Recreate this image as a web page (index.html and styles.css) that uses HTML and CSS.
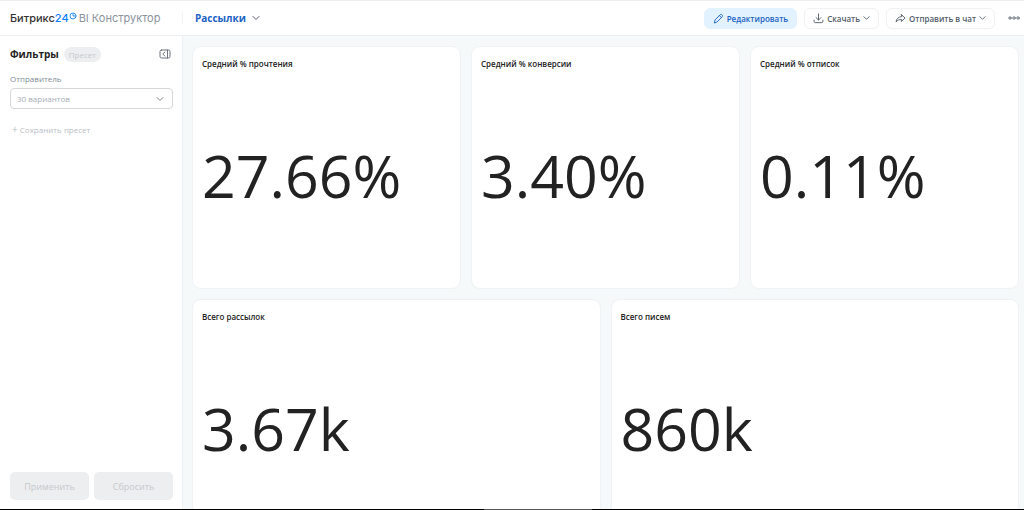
FILE: index.html
```
<!DOCTYPE html>
<html lang="ru">
<head>
    <meta charset="UTF-8">
    <meta name="viewport" content="width=device-width, initial-scale=1.0">
    <title>Рассылки - BI Конструктор</title>
    <link rel="stylesheet" href="styles.css">
</head>
<body>
    <header class="header">
        <a class="logo" href="#">
            <span class="logo-name">Битрикс</span><span class="logo-number">24</span>
            <svg class="logo-clock" viewBox="0 0 8 8"><circle cx="4" cy="4" r="3"/><path d="M4 2.2V4h1.6"/></svg>
            <span class="logo-product">BI Конструктор</span>
        </a>
        <button class="dashboard-switch" type="button">
            Рассылки
            <svg class="chevron" viewBox="0 0 8 8"><path d="M1 2.5l3 3 3-3"/></svg>
        </button>
        <div class="actions">
            <button class="btn btn-edit" type="button">
                <svg class="icon" viewBox="0 0 12 12"><path d="M1.5 10.5l.8-3L8 1.8q.7-.7 1.4 0l.8.8q.7.7 0 1.4L4.500 9.700zM7 2.800L9.200 5"/></svg>
                Редактировать
            </button>
            <button class="btn" type="button">
                <svg class="icon" viewBox="0 0 12 12"><path d="M6 1v6.500M3.300 5L6 7.700 8.700 5M1.200 7.800v1.400q0 1.300 1.300 1.300h7q1.300 0 1.300-1.300V7.800"/></svg>
                Скачать
                <svg class="chevron" viewBox="0 0 8 8"><path d="M1 2.500l3 3 3-3"/></svg>
            </button>
            <button class="btn" type="button">
                <svg class="icon" viewBox="0 0 12 12"><path d="M7 1.800l4 3.700-4 3.700V7.100C4.500 7 2.700 7.700 1.200 9.800 1.400 6.400 3.500 4.100 7 3.900z"/></svg>
                Отправить в чат
                <svg class="chevron" viewBox="0 0 8 8"><path d="M1 2.500l3 3 3-3"/></svg>
            </button>
            <button class="btn-more" type="button" aria-label="Ещё">
                <svg viewBox="0 0 12 4"><circle cx="2" cy="2" r="1.200"/><circle cx="6" cy="2" r="1.200"/><circle cx="10" cy="2" r="1.200"/></svg>
            </button>
        </div>
    </header>

    <div class="layout">
        <aside class="sidebar">
            <div class="sidebar-head">
                <h2 class="sidebar-title">Фильтры</h2>
                <span class="preset">Пресет</span>
                <button class="collapse" type="button" aria-label="Свернуть">
                    <svg viewBox="0 0 12 10"><rect x="1" y="1" width="10" height="8" rx="1.500"/><path d="M8.500 1v8M5.800 3L3.800 5l2 2"/></svg>
                </button>
            </div>
            <label class="field-label" for="sender">Отправитель</label>
            <div class="select-wrap">
                <select class="select" id="sender">
                    <option>30 вариантов</option>
                </select>
                <svg class="chevron select-arrow" viewBox="0 0 8 8"><path d="M1 2.500l3 3 3-3"/></svg>
            </div>
            <button class="save-preset" type="button"><span class="plus">+</span> Сохранить пресет</button>
            <div class="sidebar-buttons">
                <button class="filter-btn" type="button" disabled>Применить</button>
                <button class="filter-btn" type="button" disabled>Сбросить</button>
            </div>
        </aside>

        <main class="dashboard">
            <section class="card">
                <h3>Средний % прочтения</h3>
                <p>27.66%</p>
            </section>
            <section class="card">
                <h3>Средний % конверсии</h3>
                <p>3.40%</p>
            </section>
            <section class="card">
                <h3>Средний % отписок</h3>
                <p>0.11%</p>
            </section>
            <section class="card card-wide">
                <h3>Всего рассылок</h3>
                <p>3.67k</p>
            </section>
            <section class="card card-wide">
                <h3>Всего писем</h3>
                <p>860k</p>
            </section>
        </main>
    </div>
    <div class="bottom-line"><span></span></div>
</body>
</html>
```

FILE: styles.css
```
* {
    box-sizing: border-box;
}

body {
    margin: 0;
    height: 100vh;
    display: flex;
    flex-direction: column;
    overflow: hidden;
    background: #f5f9fa;
    color: #222;
    font-family: "Open Sans", "Noto Sans", sans-serif;
    font-size: 8px;
}

button,
select {
    font: inherit;
    color: inherit;
    padding: 0;
    border: none;
    background: none;
    cursor: pointer;
}

svg {
    display: block;
    flex: none;
    fill: none;
    stroke: currentColor;
    stroke-linecap: round;
    stroke-linejoin: round;
}

.chevron {
    width: 8px;
    height: 8px;
}

/* Header */
.header {
    display: flex;
    align-items: center;
    flex: none;
    height: 36px;
    padding-right: 4px;
    background: #fff;
    border-top: 1px solid #eceef0;
    border-bottom: 1px solid #edf0f2;
}

.logo {
    display: flex;
    align-items: center;
    width: 183px;
    height: 12px;
    padding-left: 10px;
    border-right: 1px solid #f1f3f4;
    font-family: Inter, Roboto, sans-serif;
    font-size: 11px;
    color: #333;
    text-decoration: none;
    white-space: nowrap;
}

.logo-name {
    font-weight: 500;
}

.logo-number {
    color: #0f7ff5;
    font-weight: 500;
}

.logo-clock {
    width: 8px;
    height: 8px;
    margin-bottom: 4px;
    color: #2f92f6;
}

.logo-product {
    margin-left: 2px;
    color: #8b939c;
}

.dashboard-switch {
    display: flex;
    align-items: center;
    gap: 6px;
    margin-left: 12px;
    color: #1b62c4;
    font-size: 10px;
    font-weight: 700;
}

.dashboard-switch .chevron {
    color: #525c69;
}

.actions {
    display: flex;
    align-items: center;
    gap: 7px;
    margin-left: auto;
}

.btn {
    display: flex;
    align-items: center;
    gap: 3px;
    height: 21px;
    padding: 0 8px;
    border: 1px solid #eff1f3;
    border-radius: 6px;
    color: #525c69;
    font-weight: 600;
    white-space: nowrap;
}

.btn .chevron {
    width: 7px;
}

.btn-edit {
    border-color: #e3f2ff;
    background: #e3f2ff;
    color: #1b62c4;
}

.icon {
    width: 11px;
    height: 11px;
}

.btn-more {
    margin-left: 6px;
    color: #6a737f;
}

.btn-more svg {
    width: 12px;
    height: 4px;
}

/* Filters */
.layout {
    display: flex;
    flex: 1;
    min-height: 0;
}

.sidebar {
    display: flex;
    flex-direction: column;
    flex: none;
    width: 183px;
    padding: 10px 9px 9px 10px;
    background: #fff;
    border-right: 1px solid #eef2f4;
}

.sidebar-head {
    display: flex;
    align-items: center;
    gap: 5px;
    height: 16px;
}

.sidebar-title {
    margin: 0;
    font-size: 10px;
    font-weight: 700;
}

.preset {
    padding: 0 5px;
    border-radius: 8px;
    background: #edeef0;
    color: #c6c9cd;
    line-height: 15px;
}

.collapse {
    margin-left: auto;
    margin-right: 2px;
    color: #6a737f;
}

.collapse svg {
    width: 12px;
    height: 10px;
}

.field-label {
    margin-top: 11px;
    color: #828b95;
    line-height: 12px;
}

.select-wrap {
    position: relative;
    margin-top: 3px;
}

.select {
    display: block;
    width: 100%;
    height: 21px;
    padding: 0 6px;
    appearance: none;
    border: 1px solid #d5d8db;
    border-radius: 4px;
    color: #a8adb4;
}

.select-arrow {
    position: absolute;
    top: 7px;
    right: 9px;
    color: #7c858f;
    pointer-events: none;
}

.save-preset {
    align-self: flex-start;
    margin-top: 13px;
    padding-left: 2px;
    color: #b9bec4;
    line-height: 14px;
}

.plus {
    font-size: 10px;
}

.sidebar-buttons {
    display: flex;
    gap: 5px;
    margin-top: auto;
}

.filter-btn {
    flex: 1;
    height: 28px;
    border-radius: 5px;
    background: #edeef0;
    color: #c6c9cd;
    font-size: 9px;
}

/* Cards */
.dashboard {
    display: grid;
    grid-template-columns: repeat(6, 1fr);
    grid-auto-rows: 243px;
    gap: 10px;
    flex: 1;
    padding: 10px 5px 0 9px;
    overflow: hidden;
}

.card {
    display: flex;
    flex-direction: column;
    grid-column: span 2;
    padding: 10px 9px;
    background: #fff;
    border: 1px solid #eff3f5;
    border-radius: 9px;
}

.card-wide {
    grid-column: span 3;
}

.card h3 {
    margin: 0;
    font-size: 8px;
    font-weight: 600;
    line-height: 14px;
}

.card p {
    margin: auto 0;
    font-size: 59px;
    line-height: 80px;
}

.bottom-line {
    display: flex;
    justify-content: center;
    flex: none;
    height: 1px;
    background: #000;
}

.bottom-line span {
    width: 108px;
    margin-left: 52px;
    background: #555;
}
```
